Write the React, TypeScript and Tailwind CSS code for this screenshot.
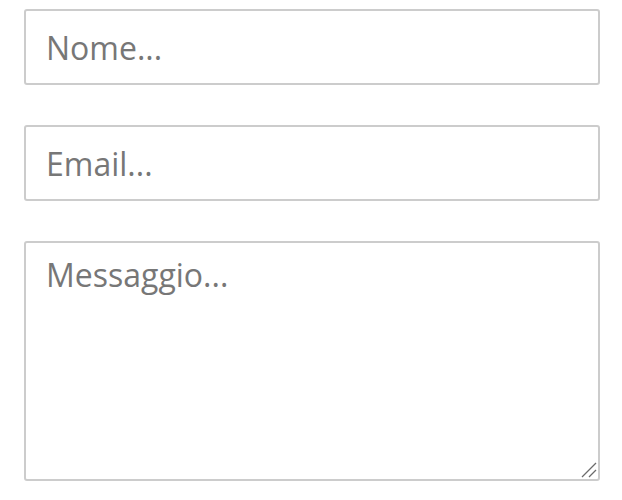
export default function App() {
  return (
    <div className="bg-white w-[622px] h-[500px] pt-[9px] pl-[24px] pr-[22px]" style={{ fontFamily: '"Open Sans", sans-serif' }}>
      <form className="flex flex-col gap-[40px]">
        <input
          type="text"
          placeholder="Nome..."
          className="w-full h-[76px] border-2 border-[#cccccc] rounded-[3px] px-[20px] text-[32px] text-[#333] placeholder:text-[#777777] outline-none"
        />
        <input
          type="email"
          placeholder="Email..."
          className="w-full h-[76px] border-2 border-[#cccccc] rounded-[3px] px-[20px] text-[32px] text-[#333] placeholder:text-[#777777] outline-none"
        />
        <div className="relative">
          <textarea
            placeholder="Messaggio..."
            className="block w-full h-[240px] resize-none border-2 border-[#cccccc] rounded-[3px] px-[20px] py-[8px] text-[32px] text-[#333] placeholder:text-[#777777] outline-none"
          />
          {/* resize grip */}
          <svg className="absolute right-[3px] bottom-[3px] pointer-events-none" width="16" height="16" viewBox="0 0 16 16">
            <line x1="1" y1="15" x2="15" y2="1" stroke="#6b6b6b" strokeWidth="1.3" />
            <line x1="8" y1="15" x2="15" y2="8" stroke="#6b6b6b" strokeWidth="1.3" />
          </svg>
        </div>
      </form>
    </div>
  );
}
